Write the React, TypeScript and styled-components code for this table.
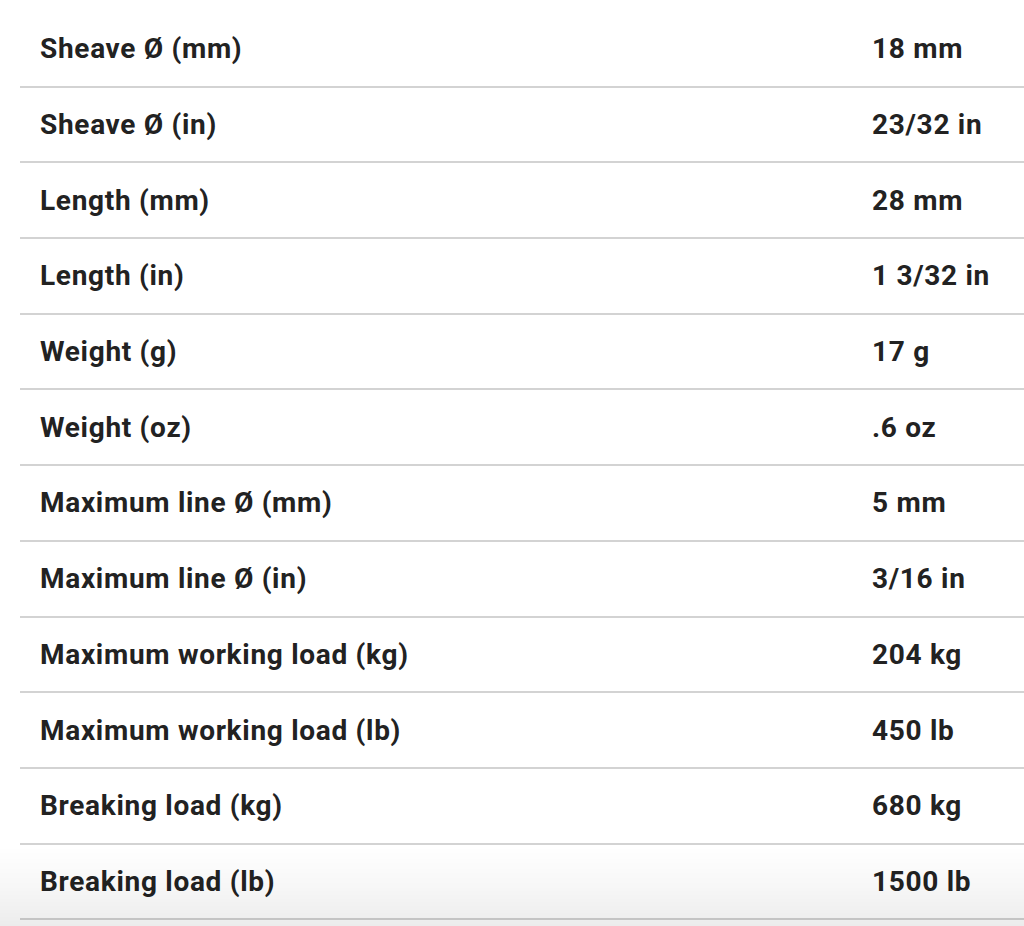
import React from "react";
import styled, { createGlobalStyle } from "styled-components";

const GlobalStyle = createGlobalStyle`
  html, body {
    margin: 0;
    padding: 0;
    background: #ffffff;
  }
  body {
    font-family: Roboto, "Liberation Sans", Arial, sans-serif;
    color: #222222;
  }
`;

const Page = styled.div`
  padding: 12px 0 0 20px;
  min-height: 926px;
  box-sizing: border-box;
`;

const Table = styled.div`
  display: flex;
  flex-direction: column;
`;

const Row = styled.div`
  display: grid;
  grid-template-columns: 832px 1fr;
  align-items: center;
  height: 75.7px;
  box-sizing: border-box;
  border-bottom: 2px solid #d3d3d3;
  padding-left: 20px;
`;

const Label = styled.div`
  font-size: 28px;
  font-weight: 700;
  letter-spacing: 0.7px;
  color: #222222;
  white-space: nowrap;
`;

const Value = styled(Label)``;

const BottomShade = styled.div`
  position: fixed;
  left: 0;
  right: 0;
  bottom: 0;
  height: 80px;
  pointer-events: none;
  background: linear-gradient(
    to bottom,
    rgba(0, 0, 0, 0) 0%,
    rgba(0, 0, 0, 0.03) 50%,
    rgba(0, 0, 0, 0.075) 100%
  );
`;

const rows: [string, string][] = [
  ["Sheave Ø (mm)", "18 mm"],
  ["Sheave Ø (in)", "23/32 in"],
  ["Length (mm)", "28 mm"],
  ["Length (in)", "1 3/32 in"],
  ["Weight (g)", "17 g"],
  ["Weight (oz)", ".6 oz"],
  ["Maximum line Ø (mm)", "5 mm"],
  ["Maximum line Ø (in)", "3/16 in"],
  ["Maximum working load (kg)", "204 kg"],
  ["Maximum working load (lb)", "450 lb"],
  ["Breaking load (kg)", "680 kg"],
  ["Breaking load (lb)", "1500 lb"],
];

export default function App() {
  return (
    <>
      <GlobalStyle />
      <Page>
        <Table>
          {rows.map(([label, value]) => (
            <Row key={label}>
              <Label>{label}</Label>
              <Value>{value}</Value>
            </Row>
          ))}
        </Table>
      </Page>
      <BottomShade />
    </>
  );
}
